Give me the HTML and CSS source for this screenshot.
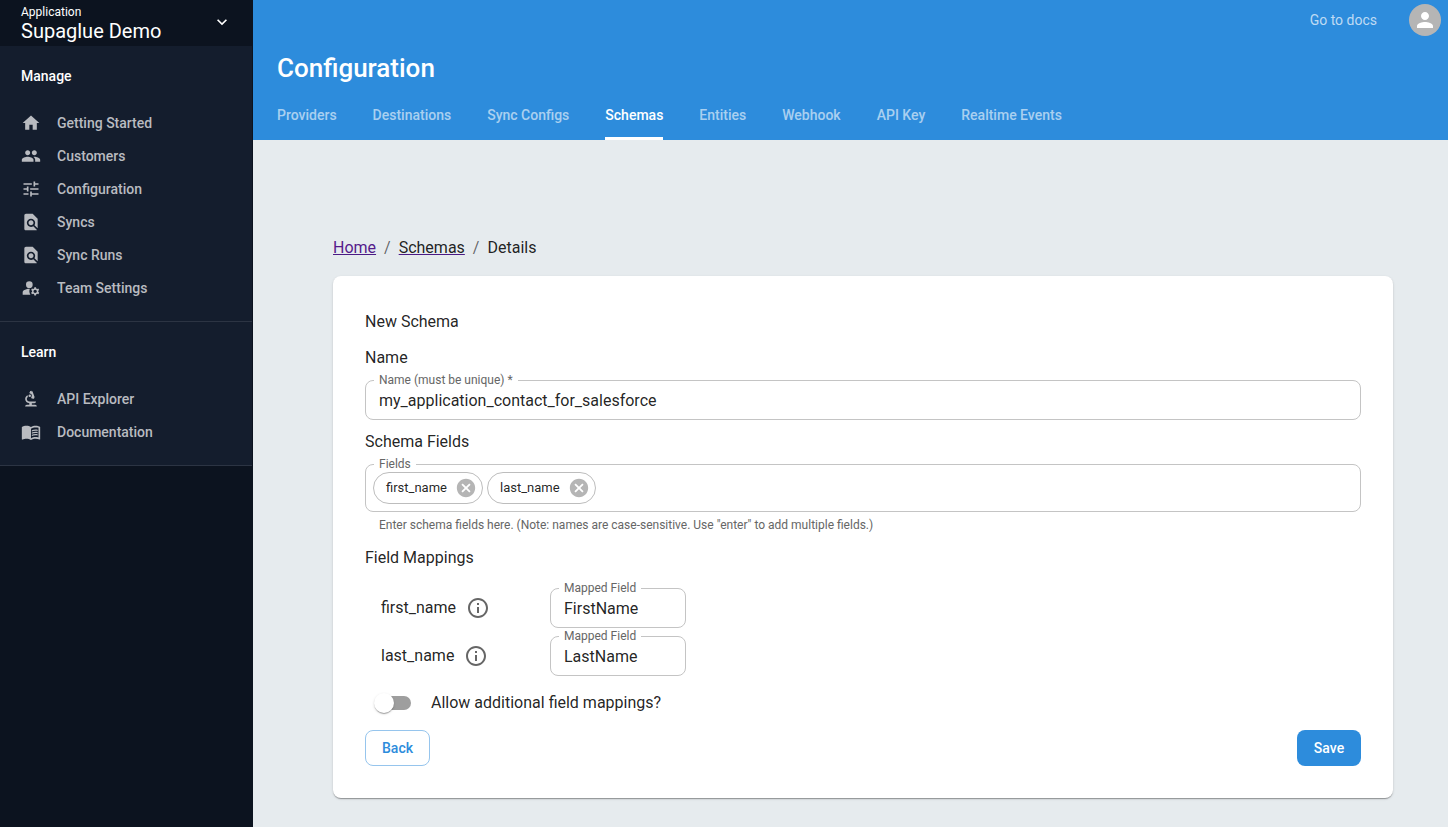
FILE: index.html
```html
<!DOCTYPE html>
<html lang="en">
<head>
<meta charset="utf-8">
<meta name="viewport" content="width=device-width, initial-scale=1">
<title>Configuration</title>
<link rel="stylesheet" href="styles.css">
</head>
<body>
<svg class="sprite" aria-hidden="true">
  <symbol id="find" viewBox="0 0 24 24"><path d="M20 19.59V8l-6-6H6c-1.1 0-1.99.9-1.99 2L4 20c0 1.1.89 2 1.99 2H18c.45 0 .85-.15 1.19-.4l-4.43-4.43c-.8.52-1.74.83-2.76.83-2.76 0-5-2.24-5-5s2.24-5 5-5 5 2.24 5 5c0 1.02-.31 1.96-.83 2.75L20 19.59zM9 13c0 1.66 1.34 3 3 3s3-1.34 3-3-1.34-3-3-3-3 1.34-3 3z"/></symbol>
  <symbol id="info" viewBox="0 0 24 24"><path d="M11 7h2v2h-2zm0 4h2v6h-2zm1-9C6.48 2 2 6.48 2 12s4.48 10 10 10 10-4.48 10-10S17.52 2 12 2zm0 18c-4.41 0-8-3.59-8-8s3.59-8 8-8 8 3.59 8 8-3.59 8-8 8z"/></symbol>
  <symbol id="cancel" viewBox="0 0 24 24"><path d="M12 2C6.47 2 2 6.47 2 12s4.47 10 10 10 10-4.47 10-10S17.53 2 12 2zm5 13.59L15.59 17 12 13.41 8.41 17 7 15.59 10.59 12 7 8.41 8.41 7 12 10.59 15.59 7 17 8.41 13.41 12 17 15.59z"/></symbol>
</svg>
<div class="app">
  <aside class="sidebar">
    <button class="switcher" type="button">
      <span class="switcher-text">
        <span class="switcher-label">Application</span>
        <span class="switcher-name">Supaglue Demo</span>
      </span>
      <svg class="icon" viewBox="0 0 24 24"><path d="M16.59 8.59 12 13.17 7.41 8.59 6 10l6 6 6-6z"/></svg>
    </button>
    <nav class="nav-group" aria-labelledby="nav-manage">
      <h2 class="nav-title" id="nav-manage">Manage</h2>
      <a class="nav-link" href="#"><svg class="icon" viewBox="0 0 24 24"><path d="M10 20v-6h4v6h5v-8h3L12 3 2 12h3v8z"/></svg>Getting Started</a>
      <a class="nav-link" href="#"><svg class="icon" viewBox="0 0 24 24"><path d="M16 11c1.66 0 2.99-1.34 2.99-3S17.66 5 16 5c-1.66 0-3 1.34-3 3s1.34 3 3 3zm-8 0c1.66 0 2.99-1.34 2.99-3S9.66 5 8 5C6.34 5 5 6.34 5 8s1.34 3 3 3zm0 2c-2.33 0-7 1.17-7 3.5V19h14v-2.5c0-2.33-4.67-3.5-7-3.5zm8 0c-.29 0-.62.02-.97.05 1.16.84 1.97 1.97 1.97 3.45V19h6v-2.5c0-2.33-4.67-3.5-7-3.5z"/></svg>Customers</a>
      <a class="nav-link" href="#"><svg class="icon" viewBox="0 0 24 24"><path d="M3 17v2h6v-2H3zM3 5v2h10V5H3zm10 16v-2h8v-2h-8v-2h-2v6h2zM7 9v2H3v2h4v2h2V9H7zm14 4v-2H11v2h10zm-6-4h2V7h4V5h-4V3h-2v6z"/></svg>Configuration</a>
      <a class="nav-link" href="#"><svg class="icon"><use href="#find"/></svg>Syncs</a>
      <a class="nav-link" href="#"><svg class="icon"><use href="#find"/></svg>Sync Runs</a>
      <a class="nav-link" href="#"><svg class="icon" viewBox="0 0 24 24"><circle cx="10" cy="8" r="4"/><path d="M10.67 13.02C10.45 13.01 10.23 13 10 13c-2.42 0-4.68.67-6.61 1.82-.88.52-1.39 1.5-1.39 2.53V20h9.26c-.79-1.13-1.26-2.51-1.26-4 0-1.07.25-2.07.67-2.98zM20.75 16c0-.22-.03-.42-.06-.63l1.14-1.01-1-1.73-1.45.49c-.32-.27-.68-.48-1.08-.63L18 11h-2l-.3 1.49c-.4.15-.76.36-1.08.63l-1.45-.49-1 1.73 1.14 1.01c-.03.21-.06.41-.06.63s.03.42.06.63l-1.14 1.01 1 1.73 1.45-.49c.32.27.68.48 1.08.63L16 21h2l.3-1.49c.4-.15.76-.36 1.08-.63l1.45.49 1-1.73-1.14-1.01c.03-.21.06-.41.06-.63zM17 18c-1.1 0-2-.9-2-2s.9-2 2-2 2 .9 2 2-.9 2-2 2z"/></svg>Team Settings</a>
    </nav>
    <nav class="nav-group" aria-labelledby="nav-learn">
      <h2 class="nav-title" id="nav-learn">Learn</h2>
      <a class="nav-link" href="#"><svg class="icon" viewBox="0 0 24 24"><path d="M7 19c-1.1 0-2 .9-2 2h14c0-1.1-.9-2-2-2h-4v-2h3c1.1 0 2-.9 2-2h-8c-1.66 0-3-1.34-3-3 0-1.09.59-2.04 1.46-2.56C8.17 9.03 8 8.54 8 8c0-.21.04-.42.09-.62C6.28 8.13 5 9.92 5 12c0 2.76 2.24 5 5 5v2H7z"/><path d="M10.56 5.51C11.91 5.54 13 6.64 13 8c0 .75-.33 1.41-.85 1.87l.59 1.62.94-.34.34.94 1.88-.68-.34-.94.94-.34-2.74-7.52-.94.34-.34-.94-1.88.68.34.94-.94.35.56 1.53z"/><circle cx="10.5" cy="8" r="1.5"/></svg>API Explorer</a>
      <a class="nav-link" href="#"><svg class="icon" viewBox="0 0 24 24"><path d="M21 5c-1.11-.35-2.33-.5-3.5-.5-1.95 0-4.05.4-5.5 1.5-1.45-1.1-3.55-1.5-5.5-1.5S2.45 4.9 1 6v14.65c0 .25.25.5.5.5.1 0 .15-.05.25-.05C3.1 20.45 5.05 20 6.5 20c1.95 0 4.05.4 5.5 1.5 1.35-.85 3.8-1.5 5.5-1.5 1.65 0 3.35.3 4.75 1.05.1.05.15.05.25.05.25 0 .5-.25.5-.5V6c-.6-.45-1.25-.75-2-1zm0 13.5c-1.1-.35-2.3-.5-3.5-.5-1.7 0-4.15.65-5.5 1.5V8c1.35-.85 3.8-1.5 5.5-1.5 1.2 0 2.4.15 3.5.5v11.5z"/><path d="M17.5 10.5c.88 0 1.73.09 2.5.26V9.24c-.79-.15-1.64-.24-2.5-.24-1.7 0-3.24.29-4.5.83v1.66c1.13-.64 2.7-.99 4.5-.99zM13 12.49v1.66c1.13-.64 2.7-.99 4.5-.99.88 0 1.73.09 2.5.26V11.9c-.79-.15-1.64-.24-2.5-.24-1.7 0-3.24.3-4.5.83zm4.5 1.84c-1.7 0-3.24.29-4.5.83v1.66c1.13-.64 2.7-.99 4.5-.99.88 0 1.73.09 2.5.26v-1.52c-.79-.16-1.64-.24-2.5-.24z"/></svg>Documentation</a>
    </nav>
  </aside>
  <div class="content">
    <header class="header">
      <div class="topbar">
        <a class="docs-link" href="#">Go to docs</a>
        <button class="avatar" type="button" aria-label="Account"><svg viewBox="0 0 24 24" width="24" height="24"><path d="M12 12c2.21 0 4-1.79 4-4s-1.79-4-4-4-4 1.79-4 4 1.79 4 4 4zm0 2c-2.67 0-8 1.34-8 4v2h16v-2c0-2.66-5.33-4-8-4z"/></svg></button>
      </div>
      <h1 class="page-title">Configuration</h1>
      <nav class="tabs" aria-label="Configuration sections">
        <a class="tab" href="#">Providers</a>
        <a class="tab" href="#">Destinations</a>
        <a class="tab" href="#">Sync Configs</a>
        <a class="tab tab-active" href="#" aria-current="page">Schemas</a>
        <a class="tab" href="#">Entities</a>
        <a class="tab" href="#">Webhook</a>
        <a class="tab" href="#">API Key</a>
        <a class="tab" href="#">Realtime Events</a>
      </nav>
    </header>
    <main class="main">
      <nav class="crumbs" aria-label="Breadcrumb">
        <a class="crumb-home" href="#">Home</a>
        <span class="crumb-sep">/</span>
        <a class="crumb-parent" href="#">Schemas</a>
        <span class="crumb-sep">/</span>
        <span>Details</span>
      </nav>
      <form class="card">
        <h2 class="heading card-title">New Schema</h2>
        <section class="section">
          <h3 class="heading">Name</h3>
          <div class="field">
            <label class="field-label" for="name">Name (must be unique) *</label>
            <input class="field-input" id="name" type="text" value="my_application_contact_for_salesforce">
          </div>
        </section>
        <section class="section">
          <h3 class="heading">Schema Fields</h3>
          <div class="field field-chips">
            <label class="field-label" for="fields">Fields</label>
            <span class="chip">first_name<button class="chip-remove" type="button" aria-label="Remove first_name"><svg width="22" height="22"><use href="#cancel"/></svg></button></span>
            <span class="chip">last_name<button class="chip-remove" type="button" aria-label="Remove last_name"><svg width="22" height="22"><use href="#cancel"/></svg></button></span>
            <input class="chip-input" id="fields" type="text">
          </div>
          <p class="helper">Enter schema fields here. (Note: names are case-sensitive. Use "enter" to add multiple fields.)</p>
        </section>
        <section class="section section-mappings">
          <h3 class="heading">Field Mappings</h3>
          <div class="mappings">
            <div class="mapping">
              <span class="mapping-name">first_name<svg class="info" width="24" height="24"><use href="#info"/></svg></span>
              <div class="field field-small">
                <label class="field-label" for="map-first">Mapped Field</label>
                <input class="field-input" id="map-first" type="text" value="FirstName">
              </div>
            </div>
            <div class="mapping">
              <span class="mapping-name">last_name<svg class="info" width="24" height="24"><use href="#info"/></svg></span>
              <div class="field field-small">
                <label class="field-label" for="map-last">Mapped Field</label>
                <input class="field-input" id="map-last" type="text" value="LastName">
              </div>
            </div>
          </div>
        </section>
        <label class="toggle"><input class="switch" type="checkbox" role="switch">Allow additional field mappings?</label>
        <div class="actions">
          <button class="button button-outlined" type="button">Back</button>
          <button class="button button-filled" type="submit">Save</button>
        </div>
      </form>
    </main>
  </div>
</div>
</body>
</html>
```

FILE: styles.css
```css
*, *::before, *::after { box-sizing: border-box; }

body {
  margin: 0;
  font-family: Roboto, "Liberation Sans", sans-serif;
  font-size: 16px;
  line-height: 24px;
  color: rgba(0, 0, 0, 0.87);
  background: #e6ebee;
}

h1, h2, h3, p { margin: 0; }
a { color: inherit; text-decoration: none; }
button, input { font: inherit; color: inherit; }
button { border: 0; padding: 0; background: none; cursor: pointer; }
svg { fill: currentColor; flex: none; display: block; }
.sprite { position: absolute; width: 0; height: 0; }
.icon { width: 20px; height: 20px; }

.app { display: flex; min-height: 100vh; }

/* Sidebar */
.sidebar {
  width: 253px;
  flex: none;
  background: #0c131f;
  border-right: 1px solid #0c131f;
}
.switcher {
  display: flex;
  align-items: center;
  justify-content: space-between;
  width: 100%;
  height: 46px;
  padding: 0 20px 3px 21px;
  color: #fff;
  text-align: left;
}
.switcher-text { display: flex; flex-direction: column; padding-top: 2px; }
.switcher-label { font-size: 12px; line-height: 16px; }
.switcher-name { font-size: 20px; line-height: 22px; }

.nav-group {
  padding: 14px 0 17px;
  background: #141d2d;
  border-bottom: 1px solid #2c3443;
}
.nav-title {
  padding: 4px 21px 18px;
  font-size: 14px;
  line-height: 24px;
  font-weight: 500;
  color: #fff;
}
.nav-link {
  display: flex;
  align-items: center;
  gap: 16px;
  height: 33px;
  padding: 0 21px;
  font-size: 14px;
  font-weight: 500;
  color: #b9bbc0;
}

/* Header */
.content { flex: 1; min-width: 0; display: flex; flex-direction: column; }
.header { background: #2d8cdc; color: #fff; }
.topbar {
  display: flex;
  align-items: center;
  justify-content: flex-end;
  gap: 32px;
  height: 40px;
  padding: 0 7px 0 24px;
}
.docs-link { font-size: 14px; color: rgba(255, 255, 255, 0.7); }
.avatar {
  display: grid;
  place-items: center;
  width: 32px;
  height: 32px;
  border-radius: 50%;
  background: #b5b5b5;
  color: #fff;
}
.page-title {
  padding: 12px 24px 8px;
  font-size: 26px;
  line-height: 32px;
  font-weight: 500;
}
.tabs { display: flex; gap: 36px; padding: 0 24px; }
.tab {
  height: 48px;
  padding-top: 11px;
  border-bottom: 3px solid transparent;
  font-size: 14px;
  font-weight: 500;
  color: rgba(255, 255, 255, 0.6);
}
.tab-active { color: #fff; border-bottom-color: #fff; }

/* Page body */
.main { flex: 1; padding: 96px 55px 29px 80px; }
.crumbs { display: flex; gap: 8px; margin-bottom: 16px; }
.crumbs a { text-decoration: underline; text-decoration-color: #4b1a84; }
.crumbs .crumb-home { color: #551a8b; }
.crumb-sep { color: rgba(0, 0, 0, 0.6); }

.card {
  display: flex;
  flex-direction: column;
  gap: 10px;
  padding: 34px 32px 32px;
  border-radius: 8px;
  background: #fff;
  box-shadow: 0 2px 1px -1px rgba(0, 0, 0, 0.2), 0 1px 1px rgba(0, 0, 0, 0.14), 0 1px 3px rgba(0, 0, 0, 0.12);
}
.heading { font-size: 16px; line-height: 24px; font-weight: 400; }
.card-title { padding-bottom: 2px; }
.section { display: flex; flex-direction: column; gap: 10px; }
.section-mappings { gap: 18px; }

/* Outlined text field whose label sits on the border */
.field {
  position: relative;
  display: flex;
  height: 40px;
  border: 1px solid #c4c4c4;
  border-radius: 8px;
}
.field-label {
  position: absolute;
  top: -9px;
  left: 8px;
  padding: 0 5px;
  font-size: 12px;
  line-height: 16px;
  color: #666;
  background: #fff;
}
.field-input {
  flex: 1;
  min-width: 0;
  padding: 2px 13px 0;
  border: 0;
  border-radius: 8px;
  outline: 0;
  background: none;
}
.field-small { width: 136px; }
.field-chips { align-items: center; gap: 4px; height: 48px; padding: 0 7px; }
.chip {
  display: flex;
  align-items: center;
  gap: 8px;
  height: 32px;
  padding: 0 5px 0 12px;
  border: 1px solid #bdbdbd;
  border-radius: 16px;
  font-size: 13px;
}
.chip-remove { color: #b5b5b5; }
.chip-input { flex: 1; min-width: 0; border: 0; outline: 0; background: none; }
.helper {
  padding: 0 14px 2px;
  margin-top: -6px;
  font-size: 12px;
  line-height: 18px;
  color: #666;
}

.mappings { display: flex; flex-direction: column; gap: 8px; }
.mapping { display: grid; grid-template-columns: 169px 136px; align-items: center; padding-left: 16px; }
.mapping-name { display: flex; align-items: center; gap: 10px; }
.info { color: #666; }

.toggle { display: flex; align-items: center; gap: 20px; padding: 5px 0 5px 12px; }
.switch {
  position: relative;
  appearance: none;
  width: 34px;
  height: 14px;
  margin: 0;
  border-radius: 7px;
  background: #9e9e9e;
}
.switch::before {
  content: "";
  position: absolute;
  top: -3px;
  left: -3px;
  width: 20px;
  height: 20px;
  border-radius: 50%;
  background: #fff;
  box-shadow: 0 2px 1px -1px rgba(0, 0, 0, 0.2), 0 1px 1px rgba(0, 0, 0, 0.14), 0 1px 3px rgba(0, 0, 0, 0.12);
}
.switch:checked { background: #90c5ee; }
.switch:checked::before { left: 17px; background: #2d8cdc; }

.actions { display: flex; justify-content: space-between; }
.button {
  min-width: 64px;
  height: 36px;
  padding: 0 16px;
  border-radius: 8px;
  font-size: 14px;
  font-weight: 500;
}
.button-outlined { border: 1px solid #96c5ed; color: #2d8cdc; }
.button-filled { background: #2d8cdc; color: #fff; }
```
